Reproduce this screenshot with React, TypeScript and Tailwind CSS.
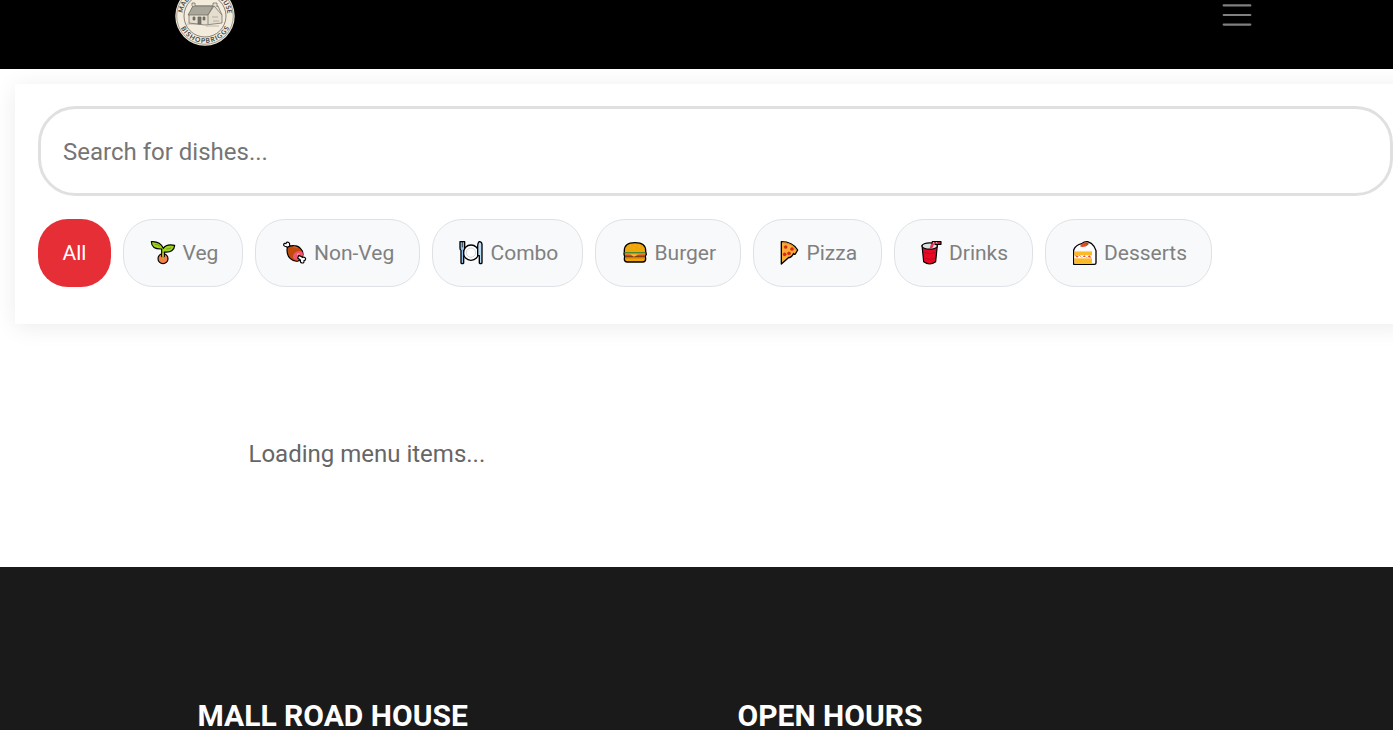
import type { ReactNode } from "react";

const Veg = (
  <g stroke="#000" strokeWidth="3.5" strokeLinejoin="round">
    <circle cx="69" cy="86" r="15" fill="#f5804c" />
    <path d="M65 57v22q4 5 8 0V66q29 3 31-20-25-5-34 9Q60 33 34 35q1 23 31 22Z" fill="#a3d41c" />
    <path d="M44 43q10 0 16 6M79 57q9 0 15-4" fill="none" stroke="#5c9e20" strokeWidth="2.500" />
    <path d="M69 70v18" stroke="#c7b32e" strokeWidth="5" />
  </g>
);
const Meat = (
  <g stroke="#000" strokeWidth="3.5" strokeLinejoin="round">
    <path d="M49 55 43 50q-9-1-8-7 2-5 7-2 1-6 7-4 5 2 4 9l4 4Z" fill="#fff" />
    <path d="M46 52q8-6 20-5 12 0 20 9 8 8 7 18-2 13-14 19-13 3-24-7Q42 74 46 52Z" fill="#c14a0e" />
    <path d="M91 65q3 6 1 13-5 11-15 13-11 0-14-9-1-10 8-16 11-6 20-1Z" fill="#f0546e" stroke="none" />
    <path d="m81 76 10 6q8-2 10 4 0 5-5 6 1 8-6 7-6-1-5-9l-8-6Z" fill="#fff" />
    <path d="M75 74q4-4 8-2" fill="none" stroke="#ffc0c8" strokeWidth="3" />
    <path d="M64 51q7-1 12 3" fill="none" stroke="#e46931" strokeWidth="3" />
  </g>
);
const Plate = (
  <g stroke="#000" strokeWidth="4" strokeLinejoin="round">
    <circle cx="69" cy="68" r="23" fill="#fff" />
    <circle cx="69" cy="68" r="14" fill="#fff" stroke="#d6d6d6" strokeWidth="3" />
    <path d="M36 35v20q0 5 3 6v38q4 4 8 0V61q3-1 3-6V35Z" fill="#8fc5ec" />
    <path d="M43 36v16" strokeWidth="2" />
    <path d="M93 35q8-1 9 8v56q-4 4-8 0V77h-5V48q0-9 4-13Z" fill="#b8dcf4" />
  </g>
);
const Burger = (
  <g stroke="#000" strokeWidth="4" strokeLinejoin="round">
    <path d="M37 64q-1-26 32-26t32 26l2 9-3 5 1 9q0 9-9 9H46q-9 0-9-9l1-8-2-6Z" fill="#f0a50a" />
    <path d="M38 68h62" stroke="#3f8d32" strokeWidth="4" />
    <path d="M39 73h60" stroke="#ed722d" strokeWidth="4" />
    <path d="M39 79h60" stroke="#873e16" strokeWidth="6" />
    <path d="m54 73 12 7 14-7Z" fill="#ffbd24" stroke="none" />
    <path d="M40 84h58" stroke="#b66b0a" strokeWidth="2" />
    <path d="M55 48h1m14-2h1m10 4h1M64 54h1" stroke="#f8bb31" strokeWidth="3" strokeLinecap="round" />
  </g>
);
const Pizza = (
  <g stroke="#000" strokeWidth="4" strokeLinejoin="round">
    <path d="M40 35q33 0 49 25l-7 12q-4 3-5-2-4 9-12 13l-2-1-23 20Z" fill="#f9ab34" />
    <path d="M43 38q29 0 41 21" fill="none" stroke="#df871d" strokeWidth="3" />
    <g fill="#e42220" stroke="#b32717" strokeWidth="1">
      <circle cx="53" cy="51" r="4.800" /><circle cx="72" cy="57" r="4.800" />
      <circle cx="50" cy="73" r="4.800" /><circle cx="63" cy="70" r="4.800" />
    </g>
  </g>
);
const Drink = (
  <g stroke="#000" strokeWidth="3.5" strokeLinejoin="round">
    <path d="m42 46 5 49q18 13 36 0l5-49Z" fill="#e80925" />
    <ellipse cx="65" cy="48" rx="23" ry="9.500" fill="#dce0e2" />
    <path d="m65 54 7-19h27v8H78l-6 13Z" fill="#f42d49" stroke="none" />
    <path d="m71 41 2-6h26v8H80" fill="none" />
    <path d="m76 36 2 5m7-5 2 5" stroke="#fff" strokeWidth="2" />
    <path d="M48 67q17 8 35 0M50 85q15 7 31 0" fill="none" stroke="#9d1025" strokeWidth="2" />
  </g>
);
const Cake = (
  <g stroke="#000" strokeWidth="4" strokeLinejoin="round">
    <path d="M35 60q6-15 24-19 8-7 18-6l12 6q10 8 13 21v37q0 4-5 4H35Z" fill="#fff" />
    <path d="M37 64h53v36H37Z" fill="#fcb928" stroke="none" />
    <path d="M37 76h53v9H37Z" fill="#fff" stroke="none" />
    <path d="m38 76 7 7 8-7 7 7 7-7 7 7 8-7 7 7Z" fill="#ef4b37" stroke="none" />
    <path d="M54 49q7-14 24-12l2 5q-5 9-20 9Z" fill="#ec4627" stroke="none" />
    <path d="m71 37 9 4-3 4-7-4Z" fill="#447c36" stroke="none" />
    <path d="M38 63h51" stroke="#e5e5e5" strokeWidth="2" />
  </g>
);

type Category = { label: string; box: string; icon: ReactNode; iconGap: string };
const categories: Category[] = [
  { label: "Veg", box: "w-[120px] pl-[26px]", icon: Veg, iconGap: "mr-[6.500px]" },
  { label: "Non-Veg", box: "w-[165px] pl-[26px]", icon: Meat, iconGap: "mr-[6px]" },
  { label: "Combo", box: "w-[151px] pl-[25px]", icon: Plate, iconGap: "mr-[6.500px]" },
  { label: "Burger", box: "w-[146px] pl-[26px]", icon: Burger, iconGap: "mr-[6.500px]" },
  { label: "Pizza", box: "w-[129px] pl-[24px]", icon: Pizza, iconGap: "mr-[2.500px]" },
  { label: "Drinks", box: "w-[139px] pl-[23px]", icon: Drink, iconGap: "mr-[5px]" },
  { label: "Desserts", box: "w-[167px] pl-[26px]", icon: Cake, iconGap: "mr-[6px]" },
];

function Logo() {
  return (
    <svg width="60" height="60" viewBox="0 0 60 60" className="shrink-0">
      <defs>
        <path id="ringTop" d="M7.500 30a22.500 22.500 0 0 1 45 0" />
        <path id="ringBottom" d="M3 30a27 27 0 0 0 54 0" />
      </defs>
      <circle cx="30" cy="30" r="29.700" fill="#f3ecdc" />
      <circle cx="30" cy="30" r="28.300" fill="none" stroke="#6b6860" strokeWidth=".6" />
      <circle cx="30" cy="30" r="21" fill="none" stroke="#6b6860" strokeWidth=".8" />
      <g fill="#45443f" fontFamily="Lato, sans-serif" fontSize="6.600" fontWeight="700">
        <text><textPath href="#ringTop" startOffset="3" textLength="65">MALL ROAD HOUSE</textPath></text>
        <text><textPath href="#ringBottom" startOffset="50%" textAnchor="middle" textLength="60">BISHOPBRIGGS</textPath></text>
      </g>
      <g stroke="#69665e" strokeWidth=".7" fill="#e5decf">
        <path d="m14 29 4-9h25l4 9v8l-17 2-16-2Z" />
        <path d="m13 29 5-9h20l-5 9Z" fill="#aaa69a" />
        <path d="m33 29 6-9 8 9M33 29v9M17 20v-3h3v3m18 0v-3h4v4" />
        <path d="M18 31h2v3h-2Zm10 0h2v3h-2ZM23 31h3v7h-3Z" fill="#77736a" />
        <path d="M37 31h6m-5 4h6M12 38h12m7 2h13" strokeWidth=".4" />
      </g>
    </svg>
  );
}

export default function App() {
  return (
    <div className="flex h-[730px] w-full flex-col overflow-hidden bg-white font-['Roboto',sans-serif]">
      <header className="relative z-10 flex h-[69px] shrink-0 items-start justify-between bg-black pl-[175px] pr-[141px]">
        <div className="-mt-[14px]"><Logo /></div>
        <button aria-label="Menu" className="mt-[3px]">
          <svg width="30" height="24" viewBox="0 0 30 24" stroke="#808080" strokeWidth="2.200" strokeLinecap="round">
            <path d="M1.700 2.400h26.600M1.700 12h26.600M1.700 21.600h26.600" />
          </svg>
        </button>
      </header>

      <section className="ml-[15px] mt-[15px] flex h-[240px] w-[1401px] shrink-0 flex-col bg-white pl-[23px] pt-[22px] shadow-[0_3px_22px_rgba(0,0,0,0.08)]">
        <input
          placeholder="Search for dishes..."
          className="h-[90px] w-[1355px] shrink-0 rounded-[37.5px] border-[3px] border-[#e0e0e0] bg-white px-[22px] pt-[2px] text-[24px] text-gray-800 outline-none placeholder:text-[#757575]"
        />
        <nav className="mt-[23px] flex gap-3 text-[21px]">
          <button className="h-[68px] w-[73px] rounded-[30px] bg-[#e62e36] pt-[2px] text-white">All</button>
          {categories.map((c) => (
            <button key={c.label} className={`flex h-[68px] shrink-0 items-center whitespace-nowrap rounded-[30px] border border-[#dee2e6] bg-[#f8f9fb] text-[#808080] ${c.box}`}>
              <svg width="26" height="26" viewBox="30 30 78 78" className={`shrink-0 ${c.iconGap}`}>{c.icon}</svg>
              <span className="pt-[2px]">{c.label}</span>
            </button>
          ))}
        </nav>
      </section>

      <main className="flex h-[243px] shrink-0 items-center pl-[248.5px] pt-[17px]">
        <p className="text-[24px] text-[#666]">Loading menu items...</p>
      </main>

      <footer className="grid h-[163px] shrink-0 grid-cols-[540px_1fr] bg-[#1a1a1a] pl-[197.5px] pt-[131px] text-[30px] font-bold leading-[36px] text-white">
        <h2>MALL ROAD HOUSE</h2>
        <h2>OPEN HOURS</h2>
      </footer>
    </div>
  );
}
